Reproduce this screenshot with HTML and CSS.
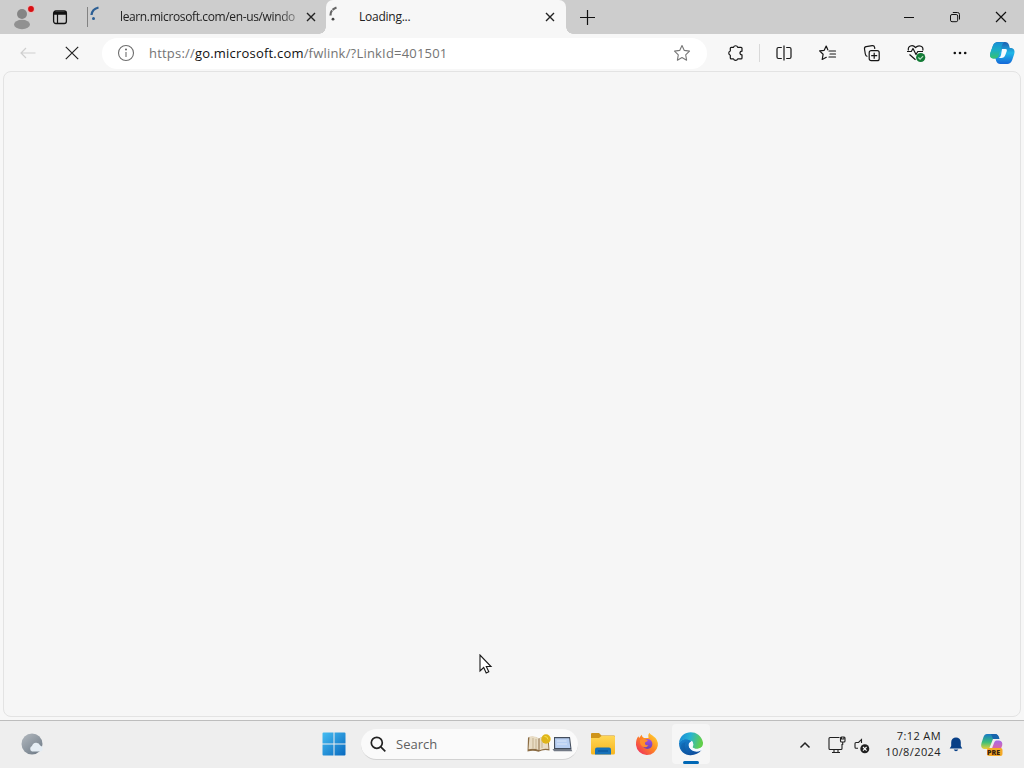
FILE: index.html
```
<!DOCTYPE html>
<html lang="en">
<head>
<meta charset="utf-8">
<title>Loading...</title>
<link rel="stylesheet" href="styles.css">
</head>
<body>
<div class="screen">
  <header class="tabstrip">
    <div class="slot profile">
      <svg width="26" height="28" viewBox="0 0 26 28"><circle cx="12" cy="11" r="5" fill="#858585"/><ellipse cx="12" cy="21.500" rx="8" ry="4.700" fill="#919191"/><circle cx="21" cy="6" r="4" fill="#e3bcbc"/><circle cx="21" cy="6" r="2.900" fill="#d80f13"/></svg>
    </div>
    <div class="slot workspaces">
      <svg width="16" height="16" viewBox="0 0 16 16" fill="none" stroke="#111"><rect x="1.600" y="2" width="12.800" height="12.500" rx="2.200" stroke-width="1.300"/><path d="M2 3.700h12M2 5h12" stroke-width="1.700"/><path d="M5.500 5v9" stroke-width="1.200"/></svg>
    </div>
    <div class="tab tab-idle">
      <svg class="spinner" width="14" height="18" viewBox="0 0 14 18"><path d="M3.500 10Q4 4 10.500 2.500" fill="none" stroke="#2d5f94" stroke-width="2.300"/><circle cx="5.500" cy="13.500" r="1.500" fill="#2d5f94"/></svg>
      <span class="tab-title title-idle">learn.microsoft.com/en-us/windo</span>
      <svg class="tab-x" width="10" height="10" viewBox="0 0 10 10"><path d="M1 1l8 8M9 1L1 9" stroke="#222" stroke-width="1.400"/></svg>
    </div>
    <div class="tab tab-active">
      <svg class="spinner" width="14" height="18" viewBox="0 0 14 18"><path d="M3.500 10.500Q3 5 9.500 2.500" fill="none" stroke="#666" stroke-width="2.200" stroke-dasharray="5.500 .8"/><circle cx="6" cy="14.200" r="1.400" fill="#444"/></svg>
      <span class="tab-title title-active">Loading...</span>
      <svg class="tab-x" width="10" height="10" viewBox="0 0 10 10"><path d="M1 1l8 8M9 1L1 9" stroke="#222" stroke-width="1.400"/></svg>
    </div>
    <div class="slot newtab"><svg width="15" height="15" viewBox="0 0 15 15"><path d="M7.500 0v15M0 7.500h15" stroke="#111" stroke-width="1.200"/></svg></div>
    <div class="window-buttons">
      <svg width="12" height="12" viewBox="0 0 12 12"><path d="M1 6.500h10" stroke="#111"/></svg>
      <svg width="12" height="12" viewBox="0 0 12 12" fill="none" stroke="#111"><rect x="1.500" y="3.500" width="7.200" height="7.200" rx="1.500"/><path d="M3.800 1.500H8.500q2 0 2 2V8.500"/></svg>
      <svg width="12" height="12" viewBox="0 0 12 12"><path d="M1 1l10 10M11 1L1 11" stroke="#111" stroke-width="1.200"/></svg>
    </div>
  </header>

  <nav class="toolbar">
    <div class="tool"><svg width="18" height="16" viewBox="0 0 18 16" fill="none" stroke="#cfcfcf" stroke-width="1.200"><path d="M16.500 8H2M7 3L2 8l5 5"/></svg></div>
    <div class="tool"><svg width="14" height="14" viewBox="0 0 14 14"><path d="M.8.800l12.400 12.400M13.200.800L.8 13.200" stroke="#222" stroke-width="1.200"/></svg></div>
    <div class="address">
      <svg class="info" width="18" height="18" viewBox="0 0 18 18" fill="none" stroke="#6e6e6e" stroke-width="1.100"><circle cx="9" cy="9" r="7.500"/><path d="M9 8v5"/><circle cx="9" cy="5.500" r=".5" fill="#6e6e6e"/></svg>
      <span class="url">https://<b>go.microsoft.com</b>/fwlink/?LinkId=401501</span>
      <svg class="star" width="18" height="18" viewBox="0 0 18 18"><path d="M9 1.500l2.300 4.900 5.200.7-3.800 3.700.9 5.400L9 13.600l-4.600 2.600.9-5.400L1.500 7.100l5.200-.7z" fill="none" stroke="#777" stroke-width="1.100" stroke-linejoin="round"/></svg>
    </div>
    <div class="tool"><svg width="18" height="18" viewBox="0 0 18 18"><path d="M6.500 3.300a2.200 2.200 0 0 1 4.200 0H14q1 0 1 1V7.200c-2.700-.2-2.700 3.800 0 3.600v3.100q0 1-1 1h-3.300a2.200 2.200 0 0 1-4.200 0H4.300q-1 0-1-1v-2.700a2.200 2.200 0 0 1 0-4.200V4.300q0-1 1-1z" fill="none" stroke="#161616" stroke-width="1.200" stroke-linejoin="round"/></svg></div>
    <div class="divider"></div>
    <div class="tool"><svg width="18" height="18" viewBox="0 0 18 18" fill="none" stroke="#161616" stroke-width="1.200"><path d="M6.800 3.500H3.500q-1.500 0-1.500 1.500v8q0 1.500 1.500 1.500h3.300M11.200 3.500h3.300q1.500 0 1.500 1.500v8q0 1.500-1.500 1.500h-3.300M9 1.500v15"/></svg></div>
    <div class="tool"><svg width="20" height="18" viewBox="0 0 20 18" fill="none" stroke="#161616" stroke-width="1.200" stroke-linecap="round" stroke-linejoin="round"><path d="M9.800 5.800L8.200 2 6.200 6.300l-4.600.6 3.500 3.400-.9 5.200 4.100-2.200M11 7h6.500M12 10h5.500M11 13h6.500"/></svg></div>
    <div class="tool"><svg width="18" height="18" viewBox="0 0 18 18" fill="none" stroke="#161616" stroke-width="1.200"><rect x="6.200" y="6.700" width="10" height="10" rx="2"/><path d="M11.200 8.700v6M8.200 11.700h6M4.400 12.500Q2.600 12 2.300 10L1.500 5q-.3-2 1.700-2.300l6-1q2-.3 2.400 1.700l.2 1.400"/></svg></div>
    <div class="tool"><svg width="20" height="20" viewBox="0 0 20 20" fill="none"><path d="M2.400 7.500C1.500 3 6.500 1 9.500 4.500c3.500-3.500 8.500-1 7.200 3M1 8.500h4.300L7 5.500l3 6 1.800-3H17M3.500 11.500l6 5.300" stroke="#161616" stroke-width="1.200" stroke-linejoin="round"/><circle cx="14.700" cy="14.500" r="4.600" fill="#147c37"/><path d="M12.400 14.500l1.700 1.700 3-3" stroke="#b9dfc4" stroke-width="1.200"/></svg></div>
    <div class="tool"><svg width="16" height="6" viewBox="0 0 16 6" fill="#111"><circle cx="2.800" cy="3" r="1.300"/><circle cx="8" cy="3" r="1.300"/><circle cx="13.200" cy="3" r="1.300"/></svg></div>
    <div class="tool tool-copilot">
      <svg width="26" height="24" viewBox="0 0 26 24"><defs><linearGradient id="c1" x2="0" y2="1"><stop stop-color="#178fd6"/><stop offset=".5" stop-color="#1bafc4"/><stop offset="1" stop-color="#37c26c"/></linearGradient><linearGradient id="c2" x2="0" y2="1"><stop stop-color="#1d5cae"/><stop offset=".5" stop-color="#20b8e8"/><stop offset="1" stop-color="#1467d8"/></linearGradient></defs><path d="M9 1h7q3 0 4 3l.8 3h1.700q4 1 2.700 6l-2 6q-1.500 4-5 4h-7q-3 0-4-3l-.7-2.500H4.300Q0 17 1.300 12L4 4.500Q5.500 1 9 1z" fill="url(#c2)"/><path d="M8.500 1.300h7.200q-2 .7-2.700 3L10 14q-1 3.500-4.500 3.500H4Q0 17 1.300 12L4 4.500q1.200-3.200 4.500-3.200z" fill="url(#c1)"/><path d="M13 8h3.500q2 0 1.300 2l-1.500 4q-1 3-4 3H9.500q2-.5 2.500-3z" fill="#f5fcff"/></svg>
    </div>
  </nav>

  <main class="page"></main>

  <footer class="taskbar">
    <div class="weather"><svg width="24" height="24" viewBox="0 0 24 24"><defs><linearGradient id="moon" x2=".8" y2="1"><stop stop-color="#b4bac0"/><stop offset="1" stop-color="#707c88"/></linearGradient></defs><circle cx="12" cy="12" r="10.500" fill="url(#moon)"/><path d="M12 19.500a3 3 0 0 1 0-5.500 4.300 4.300 0 0 1 8.200-.5 3.200 3.200 0 0 1 .8 6z" fill="#e5edf4"/></svg></div>
    <div class="start"><svg width="24" height="24" viewBox="0 0 24 24"><defs><linearGradient id="win" x2="1" y2="1"><stop stop-color="#46bdf2"/><stop offset="1" stop-color="#0869bf"/></linearGradient></defs><path d="M1.500.5h10v11H.5v-10q0-1 1-1zM12.500.5h10q1 0 1 1v10h-11zM.5 12.500h11v11h-10q-1 0-1-1zM12.500 12.500h11v10q0 1-1 1h-10z" fill="url(#win)"/></svg></div>
    <div class="search">
      <svg class="lens" width="16" height="16" viewBox="0 0 16 16" fill="none" stroke="#222" stroke-width="1.700"><circle cx="6.800" cy="6.800" r="5.500"/><path d="M10.800 10.800l4.500 4.500"/></svg>
      <span class="search-text">Search</span>
      <svg width="46" height="22" viewBox="0 0 46 22"><path d="M1 4.500q6-2 10.500 1Q16 3 21.500 4.500l1 13q-6-1.500-11 1.300-5-2-11-.3z" fill="#8a6b43"/><path d="M2.500 3.500q5-1 9 1.500v12q-4-2-10-.7zM12.500 5q4-2.500 8-1.500l1 12.500q-5-1-9 1.200z" fill="#e9ddc5"/><path d="M6 5v10M9 6v10M15 6v9" stroke="#c5b391"/><circle cx="19" cy="6" r="4.700" fill="#dfb51b"/><path d="M17.500 3.500q3-.5 3.500 3" stroke="#f7e34c" fill="none"/><path d="M27 4h16l1.500 12H27z" fill="#424c5b"/><path d="M28 5.200h14.200l1.200 9.800H28.200z" fill="#b8cff2"/><path d="M30 8h9.500M30 11h10" stroke="#dbe6f8"/><path d="M25.500 16h18.800l1 2.200H27z" fill="#727985"/></svg>
    </div>
    <div class="app"><svg width="26" height="24" viewBox="0 0 26 24"><defs><linearGradient id="fold" x2="0" y2="1"><stop stop-color="#ffd756"/><stop offset="1" stop-color="#f7b51e"/></linearGradient></defs><path d="M1 2q0-1 1-1h7l2.500 2.500H24q1 0 1 1V9H1z" fill="#cf941a"/><path d="M1 6h8l2.500-2H24q1 0 1 1v16q0 1.500-1.500 1.500h-21Q1 22.500 1 21z" fill="url(#fold)"/><path d="M5 22.500v-5q0-2 2-2h12q2 0 2 2v5z" fill="#1671b8"/><path d="M8 19h10" stroke="#0b5ba0" stroke-width="1.500"/></svg></div>
    <div class="app"><svg width="24" height="24" viewBox="0 0 24 24"><defs><linearGradient id="fox" x1="1" x2="0" y2="1"><stop stop-color="#ffe238"/><stop offset=".45" stop-color="#ff8b20"/><stop offset="1" stop-color="#ed1f67"/></linearGradient><linearGradient id="globe" x2="0" y2="1"><stop stop-color="#a451e1"/><stop offset="1" stop-color="#6b43b4"/></linearGradient></defs><path d="M14.300.7q1 1.600 2.800 2.500 6.600 4.300 5.700 10.500A11 11 0 0 1 1 13Q.6 7.500 3.400 4.200L4.200 6l2.400-3.300Q7 5 9 6h4.500Q12.500 3 14.300.7z" fill="url(#fox)"/><circle cx="12.400" cy="12" r="5" fill="url(#globe)"/><path d="M5 8q4-2 7 0l1 .7-3 1.800q-.5 3.500 3.500 2.500-2 3.500-6 1.500-3-2-2.500-6.500z" fill="#ff8d2d"/></svg></div>
    <div class="app app-open">
      <svg width="26" height="26" viewBox="0 0 26 26"><defs><linearGradient id="e1" x1="0" x2="1" y2=".2"><stop stop-color="#1687d7"/><stop offset=".5" stop-color="#27b3d3"/><stop offset="1" stop-color="#62cf4c"/></linearGradient><linearGradient id="e2" x2=".6" y2="1"><stop stop-color="#1686d2"/><stop offset="1" stop-color="#0e4f9e"/></linearGradient></defs><path d="M1 12C4 6 12 7 14 10.500c-7 4-1 11.500 9.500 8.500C18 27 1 26.500 1 12z" fill="url(#e2)"/><path d="M1 12C2-1.500 22-3 25 11.500 25.500 19 16 19 14.500 16q2-3-1-5.500C9 7 4 8 1 12z" fill="url(#e1)"/><path d="M8 11c-3 4 0 11 5 13.500-8-.5-12-7-9-12z" fill="#0d5398" opacity=".3"/><path d="M14 9.800q-4.500 2-3 6.200 3 5.500 9.500 4.500l4-1.500v-3q-6 4-10.500.5 2.500-3 0-6.700z" fill="#f4faff"/></svg>
      <span class="open-mark"></span>
    </div>
    <div class="tray">
      <svg class="chevron" width="12" height="8" viewBox="0 0 12 8"><path d="M1.500 6.500L6 2l4.500 4.500" fill="none" stroke="#222" stroke-width="1.500"/></svg>
      <svg class="network" width="18" height="18" viewBox="0 0 18 18" fill="none" stroke="#202020" stroke-width="1.100"><path d="M11.500 1.500H2q-1 0-1 1v10q0 1 1 1h11q1 0 1-1V8M6 13.500v3M10 13.500v3M4 16.500h8"/><rect x="12.500" y="1" width="4.500" height="5" rx="1"/><path d="M13.500 1v2h2.500V1M14.700 6v3"/></svg>
      <svg class="sound" width="16" height="16" viewBox="0 0 16 16"><path d="M7.500 5V1.500L4.500 4.500H2q-1 0-1 1v3.700q0 1 1 1h2" fill="none" stroke="#202020" stroke-width="1.100"/><circle cx="10.800" cy="10.800" r="4.500" fill="#202020"/><path d="M9 9l3.600 3.600M12.600 9L9 12.600" stroke="#fff" stroke-width="1.100"/></svg>
      <div class="clock"><span>7:12 AM</span><span>10/8/2024</span></div>
      <svg class="bell" width="14" height="16" viewBox="0 0 14 16" fill="#073f86"><path d="M2.200 10V6.200a4.800 4.800 0 0 1 9.600 0V10l1.500 2.500H.7zM4.700 13.500h4.600Q8.500 15.300 7 15.300t-2.300-1.800z"/></svg>
      <svg class="preview" width="26" height="26" viewBox="0 0 26 26"><defs><linearGradient id="p1" x2="0" y2="1"><stop stop-color="#1778c6"/><stop offset=".55" stop-color="#3dbf79"/><stop offset="1" stop-color="#e9cf36"/></linearGradient><linearGradient id="p2" x2="0" y2="1"><stop stop-color="#a56aeb"/><stop offset="1" stop-color="#ef638c"/></linearGradient></defs><path d="M8 2h8q3 0 4 5h-6l-4 10H5q-4-1-2.500-6L4.500 5Q5.500 2 8 2z" fill="url(#p1)"/><path d="M12 2h4q3.500 0 4.500 5H14z" fill="#1764ac"/><path d="M17 8.500h3q4 .5 3.200 5L21 19h-9l3-8q.5-2 2-2.500z" fill="url(#p2)"/><rect x="8" y="16" width="15.500" height="8" rx="2" fill="#f6a928"/><text class="pre" x="8" y="23">PRE</text></svg>
    </div>
  </footer>

  <svg class="cursor" width="14" height="21" viewBox="0 0 14 21"><path d="M1 1v16l3.700-3.500L7.200 19l2.600-1.200L7.300 12.500H12z" fill="#fff" stroke="#1a1a1a" stroke-width="1.100"/></svg>
</div>
</body>
</html>
```
FILE: styles.css
```
* { box-sizing: border-box; }
body { margin: 0; font-family: "Open Sans", "Noto Sans", sans-serif; color: #222; }
svg { display: block; flex: none; }
.screen { position: relative; width: 1024px; height: 768px; display: flex; flex-direction: column; overflow: hidden; background: #f7f7f7; }

.tabstrip { height: 34px; flex: none; display: flex; background: #cdcdcd; }
.slot { display: flex; align-items: center; justify-content: center; flex: none; }
.profile { width: 40px; padding: 0 0 0 5px; }
.workspaces { width: 47px; padding-right: 7px; }
.tab { display: flex; align-items: center; position: relative; flex: none; }
.tab-idle { width: 239px; }
.tab-idle::before { content: ""; width: 1px; height: 20px; background: #828282; }
.tab-idle .spinner { margin: -7px 0 0 0; }
.title-idle { margin-left: 18px; width: 178px; letter-spacing: -0.37px; mask-image: linear-gradient(90deg, #000 88%, #0005 100%); }
.tab-title { font-size: 12px; line-height: 18px; white-space: nowrap; }
.tab-idle .tab-x { margin-left: 8px; }
.tab-active { width: 240px; background: #f7f7f7; border-radius: 7px 7px 0 0; }
.tab-active::before, .tab-active::after { content: ""; position: absolute; bottom: 0; width: 7px; height: 7px; }
.tab-active::before { left: -7px; background: radial-gradient(circle at 0 0, transparent 6.5px, #f7f7f7 7px); }
.tab-active::after { right: -7px; background: radial-gradient(circle at 100% 0, transparent 6.5px, #f7f7f7 7px); }
.tab-active .spinner { margin: -7px 0 0 1px; }
.title-active { margin-left: 18px; width: 186px; letter-spacing: -0.25px; }
.newtab { width: 43px; }
.window-buttons { margin-left: auto; margin-right: 17px; display: flex; align-items: center; gap: 34px; }

.toolbar { height: 37px; flex: none; display: flex; align-items: center; padding: 1px 0 0 6px; }
.tool { width: 44px; height: 34px; flex: none; display: flex; align-items: center; justify-content: center; }
.address { width: 605px; height: 31px; margin: 0 7px 0 8px; border-radius: 16px; background: #fff; display: flex; align-items: center; padding: 0 16px 0 15px; flex: none; }
.url { margin-left: 14px; font-size: 13px; letter-spacing: 0.2px; color: #747474; white-space: nowrap; }
.url b { font-weight: 400; color: #111; }
.star { margin-left: auto; }
.divider { width: 1px; height: 18px; background: #d9d9d9; margin: 0 2px 0 1px; flex: none; }
.tool-copilot { width: 40px; }

.page { flex: 1; margin: 0 3px 3px; background: #f6f6f6; border: 1px solid #e3e3e3; border-radius: 8px; }

.taskbar { height: 48px; flex: none; display: flex; align-items: center; background: #eeeeee; border-top: 1px solid #bdbdbd; }
.weather { width: 312px; padding-left: 20px; margin-top: -1px; }
.start { width: 49px; padding-left: 10px; margin-top: -1px; }
.search { width: 217px; height: 31px; border-radius: 16px; background: #fafafa; border-bottom: 1px solid #d2d2d2; display: flex; align-items: center; padding: 0 5px 0 9px; margin-right: 3px; }
.search-text { font-size: 13px; color: #606060; margin: 0 auto 0 10px; }
.app { width: 44px; height: 40px; display: flex; justify-content: center; align-items: center; position: relative; margin-top: -1px; }
.app-open { width: 38px; margin-left: 3px; background: #f6f6f6; border-radius: 4px; }
.open-mark { position: absolute; bottom: 0; left: 11px; width: 16px; height: 3px; border-radius: 2px; background: #0067b5; }
.tray { margin-left: auto; padding-right: 19px; display: flex; align-items: center; }
.network { margin-left: 17px; }
.sound { margin-left: 8px; margin-top: 2px; }
.clock { width: 71px; display: flex; flex-direction: column; align-items: flex-end; font-size: 11px; line-height: 16px; letter-spacing: 0.4px; margin-top: -2px; }
.bell { margin-left: 8px; margin-top: -2px; }
.preview { margin-left: 16px; }
.pre { font: 800 7px "Open Sans", sans-serif; fill: #3a220d; }
.cursor { position: absolute; left: 479px; top: 654px; }
```
